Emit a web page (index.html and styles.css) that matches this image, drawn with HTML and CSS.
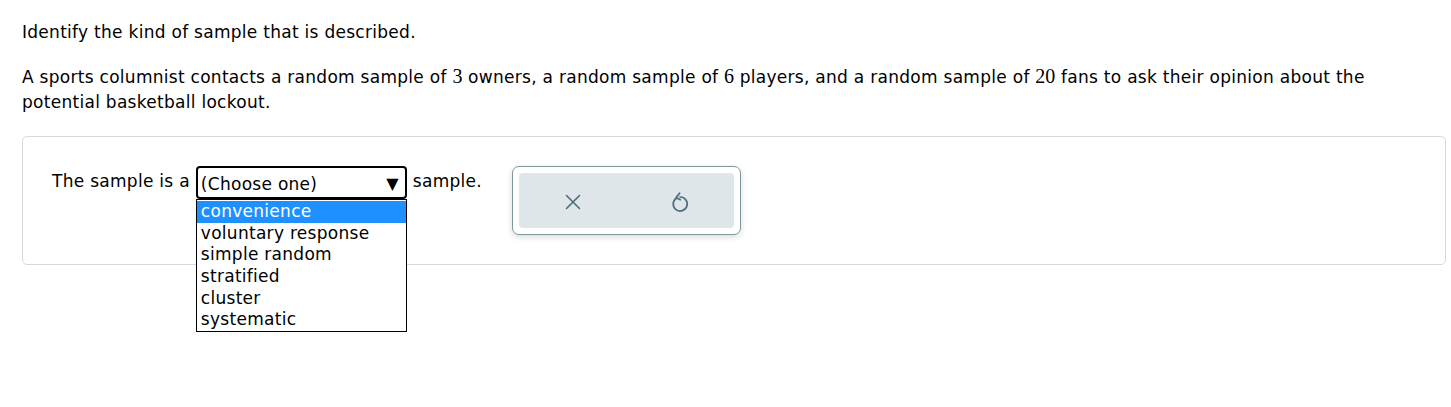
FILE: index.html
```html
<!DOCTYPE html>
<html>
<head>
<meta charset="utf-8">
<link rel="stylesheet" href="styles.css">
</head>
<body>
<div class="page">
  <p class="prompt">Identify the kind of sample that is described.</p>
  <p class="question">A sports columnist contacts a random sample of <span class="num">3</span> owners, a random sample of <span class="num">6</span> players, and a random sample of <span class="num">20</span> fans to ask their opinion about the potential basketball lockout.</p>
  <div class="answer-box">
    <div class="row">
      <span class="label">The sample is a</span>
      <div class="select-wrap">
        <div class="select"><span>(Choose one)</span><span class="arrow">&#9660;</span></div>
        <ul class="options">
          <li class="active">convenience</li>
          <li>voluntary response</li>
          <li>simple random</li>
          <li>stratified</li>
          <li>cluster</li>
          <li>systematic</li>
        </ul>
      </div>
      <span class="label after">sample.</span>
    </div>
    <div class="tools">
      <div class="tools-inner">
        <div class="tool">
          <svg width="18" height="18" viewBox="0 0 18 18"><path d="M2.5 2.5 L15.5 15.5 M15.5 2.5 L2.5 15.5" stroke="#4d6c79" stroke-width="1.6" fill="none" stroke-linecap="round"/></svg>
        </div>
        <div class="tool">
          <svg width="20" height="22" viewBox="0 0 20 22"><path d="M6.3 7.2 A7 7 0 1 0 10 6 L10 6" stroke="#4d6c79" stroke-width="1.7" fill="none" stroke-linecap="round"/><path d="M9.6 2.2 L6.2 6.4 L10.2 8.8" stroke="#4d6c79" stroke-width="1.7" fill="none" stroke-linecap="round" stroke-linejoin="round"/></svg>
        </div>
      </div>
    </div>
  </div>
</div>
</body>
</html>
```
FILE: styles.css
```css
html, body {
  margin: 0;
  padding: 0;
  background: #fff;
}
body {
  font-family: "DejaVu Sans", Verdana, sans-serif;
  font-size: 17px;
  letter-spacing: 0.28px;
  color: #000;
}
.page {
  padding: 20px 5px 0 22px;
  min-height: 407px;
  box-sizing: border-box;
}
.prompt {
  margin: 0;
  line-height: 24px;
}
.question {
  margin: 20px 0 0 0;
  line-height: 25px;
  padding-right: 60px;
}
.num {
  font-family: "Liberation Serif", "Times New Roman", serif;
  font-size: 20px;
  letter-spacing: 0;
}
.answer-box {
  margin-top: 21px;
  border: 1px solid #d3dbe0;
  border-radius: 5px;
  padding: 29px 29px;
  display: flex;
  align-items: flex-start;
  gap: 30px;
}
.row {
  display: flex;
  align-items: flex-start;
}
.label {
  line-height: 30px;
  margin-right: 6px;
}
.label.after {
  margin-left: 6px;
  margin-right: 0;
}
.select-wrap {
  position: relative;
  width: 211px;
}
.select {
  box-sizing: border-box;
  height: 33px;
  border: 2px solid #000;
  border-radius: 4px;
  display: flex;
  align-items: center;
  justify-content: space-between;
  padding: 2px 6px 0 3px;
}
.arrow {
  font-size: 16px;
}
.options {
  position: absolute;
  z-index: 5;
  left: 0;
  top: 33px;
  width: 211px;
  box-sizing: border-box;
  margin: 0;
  padding: 1px 0 0 0;
  list-style: none;
  border: 1px solid #000;
  background: #fff;
}
.options li {
  height: 21.67px;
  line-height: 21.67px;
  padding-left: 4px;
}
.options li.active {
  background: #1e90ff;
  color: #fff;
}
.tools {
  border: 1px solid #7e979f;
  border-radius: 7px;
  padding: 6px;
  box-shadow: 0 2px 6px rgba(0, 0, 0, 0.15);
  background: #fff;
}
.tools-inner {
  width: 215px;
  height: 55px;
  background: #dfe6e9;
  border-radius: 4px;
  display: flex;
}
.tool {
  flex: 1;
  display: flex;
  align-items: center;
  justify-content: center;
  padding-top: 3px;
}
```
